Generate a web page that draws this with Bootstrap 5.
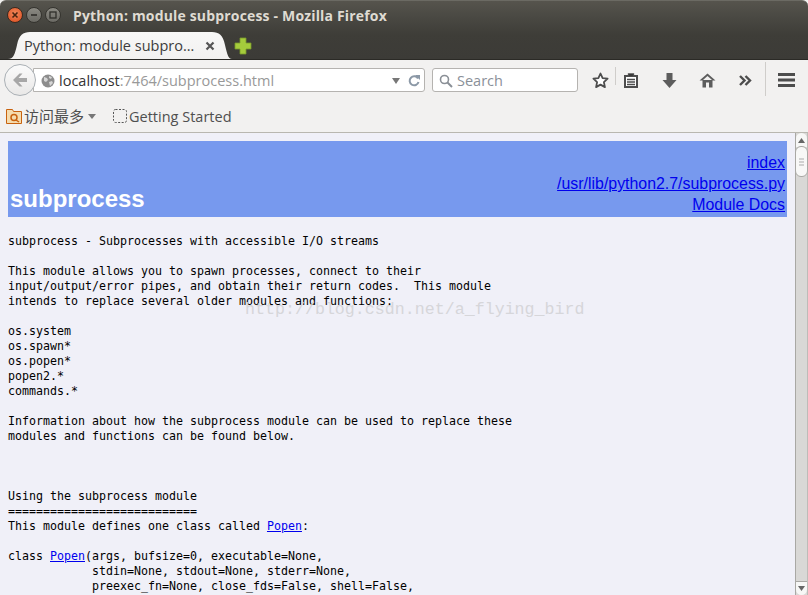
<!DOCTYPE html>
<html lang="en">
<head>
<meta charset="utf-8">
<title>Python: module subprocess</title>
<link rel="stylesheet" href="https://cdn.jsdelivr.net/npm/bootstrap@5.3.0/dist/css/bootstrap.min.css">
<style>
html,body{margin:0;height:100%;overflow:hidden;background:#3c3b37}
.ff-win{width:808px;height:595px;overflow:hidden;font-family:"Open Sans","Noto Sans CJK SC",sans-serif;position:relative;background:#f2f1f0}
.ff-top{height:60px;background:linear-gradient(#56544d 0,#4b4a44 14px,#3e3d38 34px,#3c3b37 100%);border-top:1px solid #6b6a63;border-radius:6px 6px 0 0;border-bottom:1px solid #2b2a26;box-sizing:border-box}
.ff-titlebar{height:30px;padding:0 0 2px 7px}
.ff-dot{width:16px;height:16px;border-radius:50%;margin-right:3px;display:flex;align-items:center;justify-content:center}
.ff-close{background:radial-gradient(circle at 50% 40%,#f38a5c,#dc4a1c);border:1px solid #3a2a20}
.ff-min,.ff-max{background:linear-gradient(#8b8a83,#6b6a64);border:1px solid #35342f}
.ff-wtitle{margin-left:9px;font-size:14px;font-weight:700;color:#dfdbd2;white-space:nowrap;letter-spacing:.17px}
.ff-tabrow{height:28px;padding-left:8px}
.ff-tab{width:224px;height:28px;background:linear-gradient(#f8f8f7,#f2f1f0);clip-path:path("M0 28 C6 28 7 22 9 14 C11 4 15 1 22 1 L204 1 C211 1 215 4 217 14 C219 22 220 28 224 28 Z");padding:2px 17px 0 16px;font-size:14.5px;color:#3c3c3c;white-space:nowrap}
.ff-tab .ff-tabtxt{width:172px;overflow:hidden;text-overflow:ellipsis}
.ff-plus{margin:0 0 4px 2px}
.ff-nav{height:40px;padding:4px 0 0 4px;position:relative}
.ff-back{width:32px;height:32px;border-radius:50%;background:linear-gradient(#fbfbfb,#e9e8e7);border:1px solid #aab0b5;z-index:2;flex:none}
.ff-url{margin-left:-3px;width:392px;height:24px;background:#fff;border:1px solid #b5b3b0;border-radius:0 3px 3px 0;font-size:14.5px;color:#999;padding:1px 0 0 7px;white-space:nowrap}
.ff-url b{font-weight:400;color:#333}
.ff-search{margin-left:7px;width:146px;height:24px;background:#fff;border:1px solid #b5b3b0;border-radius:3px;font-size:14.5px;color:#8a9099;padding:1px 0 0 6px}
.ff-tools{width:38px;display:flex;justify-content:center;flex:none}
.ff-sep{width:1px;height:34px;background:#cfcdca;flex:none}
.ff-sep1{height:18px;margin:3px 0 0 -4px}
.ff-sep2{height:34px;margin:-2px 0 0 1px}
.ff-grp1{height:32px;margin-left:3px}
.ff-grp2{height:32px;margin-left:-4px;padding-top:1px}
.ff-grp3{height:32px;margin-left:12px}
.ff-bm{height:33px;border-bottom:1px solid #b9b7b0;font-size:14.5px;color:#4f4f4f;padding:0 0 0 6px;white-space:nowrap}
.ff-cjk{font-size:15px;margin:1px 0 0 2px}
.ff-dash{margin-left:17px}
.ff-start{margin:1px 0 0 2px}
.ff-page{height:462px;background:#f0f0f8;overflow:hidden;position:relative;padding:8px 0 0 8px}
.doc-head{width:779px;height:76px;background:#7799ee;padding:0 2px}
.doc-name{font:700 24px/26px "Liberation Sans",sans-serif;color:#fff;margin-bottom:5px}
.doc-links{font:15.9px/21px "Liberation Sans",sans-serif;text-align:right;margin-bottom:2px}
.doc-links a,.doc-pre a{color:#0000ee}
.doc-pre{font:11.63px/15px "DejaVu Sans Mono",monospace;color:#000;margin:17px 0 0;overflow:visible}
.ff-mark{position:absolute;left:245px;top:167px;font:16.65px/20px "Liberation Mono",monospace;color:#d6d6da;pointer-events:none;white-space:nowrap}
.ff-scroll{position:absolute;right:0;top:133px;width:13px;height:462px;background:#d9d8d6;border-left:1px solid #a9a8a4;border-right:1px solid #bdbcb8}
.ff-cap{position:absolute;left:0;right:0;height:14px;background:#f7f7f6;display:flex;align-items:center;justify-content:center}
.ff-cap-up{top:0;border-radius:6px 6px 0 0}
.ff-cap-down{bottom:0;border-radius:0 0 6px 6px;border-top:1px solid #a9a8a4}
.ff-thumb{position:absolute;left:0;right:0;top:13px;height:31px;background:#f8f8f7;border:1px solid #a9a8a4;border-radius:6px;margin:0 -1px}
</style>
</head>
<body>
<div class="ff-win d-flex flex-column">
  <div class="ff-top flex-none">
    <div class="ff-titlebar d-flex align-items-center">
      <span class="ff-dot ff-close"><svg width="8" height="8" viewBox="0 0 8 8"><path d="M1.5 1.5l5 5M6.5 1.5l-5 5" stroke="#4a2410" stroke-width="1.6"/></svg></span>
      <span class="ff-dot ff-min"><svg width="8" height="8" viewBox="0 0 8 8"><path d="M1 4h6" stroke="#2f2e2a" stroke-width="1.6"/></svg></span>
      <span class="ff-dot ff-max"><svg width="8" height="8" viewBox="0 0 8 8"><rect x="1" y="1" width="6" height="6" fill="none" stroke="#2f2e2a" stroke-width="1.3"/></svg></span>
      <span class="ff-wtitle">Python: module subprocess - Mozilla Firefox</span>
    </div>
    <div class="ff-tabrow d-flex align-items-end">
      <div class="ff-tab d-flex align-items-center">
        <span class="ff-tabtxt">Python: module subprocess</span>
        <svg class="ms-auto" width="10" height="10" viewBox="0 0 10 10"><path d="M1.5 1.5l7 7M8.5 1.5l-7 7" stroke="#555" stroke-width="2.2"/></svg>
      </div>
      <svg class="ff-plus" width="18" height="18" viewBox="0 0 18 18"><path d="M6 1h6v5h5v6h-5v5H6v-5H1V6h5z" fill="#a5cb3c" stroke="#7a9a2a" stroke-width=".8"/></svg>
    </div>
  </div>
  <div class="ff-nav d-flex align-items-start">
    <div class="ff-back d-flex align-items-center justify-content-center">
      <svg width="16" height="14" viewBox="0 0 16 14"><path d="M7.5 0.5L1 7l6.5 6.5h3L6.5 9H15V5H6.5l4-4.500z" fill="#a7a7a7"/></svg>
    </div>
    <div class="ff-url mt-1 d-flex align-items-center">
      <svg class="me-1" width="14" height="14" viewBox="0 0 14 14"><circle cx="7" cy="7" r="6.500" fill="#8d8d8d"/><path d="M3 3l3 1 1 2-2 2-2-1zM8 8l3-1 1 2-3 3zM8 2l3 1-1 2-2-1z" fill="#d6d6d6"/></svg>
      <span><b>localhost</b>:7464/subprocess.html</span>
      <svg class="ms-auto" width="8" height="6" viewBox="0 0 8 6"><path d="M0 0h8L4 6z" fill="#777"/></svg>
      <span class="ms-2 me-1 d-flex"><svg width="12" height="12" viewBox="0 0 12 12"><path d="M10 3.500A4.500 4.500 0 1 0 10.500 7" fill="none" stroke="#8b98a6" stroke-width="2"/><path d="M7 0l5 0v5z" fill="#8b98a6"/></svg></span>
    </div>
    <div class="ff-search mt-1 d-flex align-items-center">
      <svg class="me-1" width="14" height="14" viewBox="0 0 14 14"><circle cx="5.500" cy="5.500" r="4" fill="none" stroke="#8a8f96" stroke-width="1.600"/><path d="M8.500 8.500L13 13" stroke="#8a8f96" stroke-width="2"/></svg>
      <span>Search</span>
    </div>
    <div class="ff-grp1 d-flex align-items-center">
      <span class="ff-tools"><svg width="17" height="17" viewBox="0 0 17 17"><path d="M8.500 1.500l2.100 4.600 5 .6-3.700 3.400 1 5-4.400-2.500-4.400 2.500 1-5L1.400 6.700l5-.6z" fill="#fff" stroke="#4d4d4d" stroke-width="1.800" stroke-linejoin="round"/></svg></span>
    </div>
    <span class="ff-sep ff-sep1"></span>
    <div class="ff-grp2 d-flex align-items-center">
      <span class="ff-tools"><svg width="14" height="15" viewBox="0 0 14 15"><path d="M1 3h12v11H1z" fill="#fff" stroke="#4d4d4d" stroke-width="2"/><path d="M4.500 3V1h5v2zM3 6.500h8M3 9h8M3 11.500h8" stroke="#4d4d4d" stroke-width="1.300"/></svg></span>
      <span class="ff-tools"><svg width="15" height="15" viewBox="0 0 15 15"><path d="M4.500 0h6v7h4l-7 8-7-8h4z" fill="#5d5d5d"/></svg></span>
      <span class="ff-tools"><svg width="17" height="15" viewBox="0 0 17 15"><path d="M8.500 0.500L0.500 7.500h3v7h3.500v-5h3v5H13.500v-7h3z" fill="#5d5d5d"/><path d="M8.500 3L4 7h9z" fill="#f2f1f0"/></svg></span>
      <span class="ff-tools"><svg width="13" height="11" viewBox="0 0 13 11"><path d="M1 1l4.500 4.500L1 10M6.500 1L11 5.500 6.500 10" fill="none" stroke="#4d4d4d" stroke-width="2.400"/></svg></span>
    </div>
    <span class="ff-sep ff-sep2"></span>
    <div class="ff-grp3 d-flex align-items-center">
      <svg width="17" height="14" viewBox="0 0 17 14"><path d="M0 1.500h17M0 7h17M0 12.500h17" stroke="#4d4d4d" stroke-width="2.800"/></svg>
    </div>
  </div>
  <div class="ff-bm d-flex align-items-center">
    <svg width="16" height="16" viewBox="0 0 16 16"><path d="M.5 1.500h6l1 2h8v12H.5z" fill="#f5dcae" stroke="#c8620f"/><circle cx="8" cy="9.500" r="3" fill="none" stroke="#c8620f" stroke-width="1.500"/><path d="M10 12l3 2" stroke="#c8620f" stroke-width="1.500"/></svg>
    <span class="ff-cjk">访问最多</span>
    <svg class="ms-1" width="8" height="5" viewBox="0 0 8 5"><path d="M0 0h8L4 5z" fill="#777"/></svg>
    <svg class="ff-dash" width="14" height="14" viewBox="0 0 14 14"><rect x=".5" y=".5" width="13" height="13" rx="2" fill="none" stroke="#555" stroke-dasharray="2 1.500"/></svg>
    <span class="ff-start">Getting Started</span>
  </div>
  <div class="ff-page">
    <div class="doc-head d-flex justify-content-between align-items-end">
      <div class="doc-name">subprocess</div>
      <div class="doc-links"><a href="#">index</a><br><a href="#">/usr/lib/python2.7/subprocess.py</a><br><a href="#">Module Docs</a></div>
    </div>
<pre class="doc-pre">subprocess - Subprocesses with accessible I/O streams

This module allows you to spawn processes, connect to their
input/output/error pipes, and obtain their return codes.  This module
intends to replace several older modules and functions:

os.system
os.spawn*
os.popen*
popen2.*
commands.*

Information about how the subprocess module can be used to replace these
modules and functions can be found below.



Using the subprocess module
===========================
This module defines one class called <a href="#">Popen</a>:

class <a href="#">Popen</a>(args, bufsize=0, executable=None,
            stdin=None, stdout=None, stderr=None,
            preexec_fn=None, close_fds=False, shell=False,</pre>
    <div class="ff-mark">http://blog.csdn.net/a_flying_bird</div>
  </div>
  <div class="ff-scroll">
    <div class="ff-cap ff-cap-up"><svg width="7" height="5" viewBox="0 0 7 5"><path d="M3.500 0L7 5H0z" fill="#666"/></svg></div>
    <div class="ff-thumb d-flex flex-column align-items-center justify-content-center gap-1"><svg width="5" height="8" viewBox="0 0 5 8"><path d="M0 1h5M0 4h5M0 7h5" stroke="#aaa"/></svg></div>
    <div class="ff-cap ff-cap-down"><svg width="7" height="5" viewBox="0 0 7 5"><path d="M0 0h7L3.500 5z" fill="#666"/></svg></div>
  </div>
</div>
</body>
</html>
